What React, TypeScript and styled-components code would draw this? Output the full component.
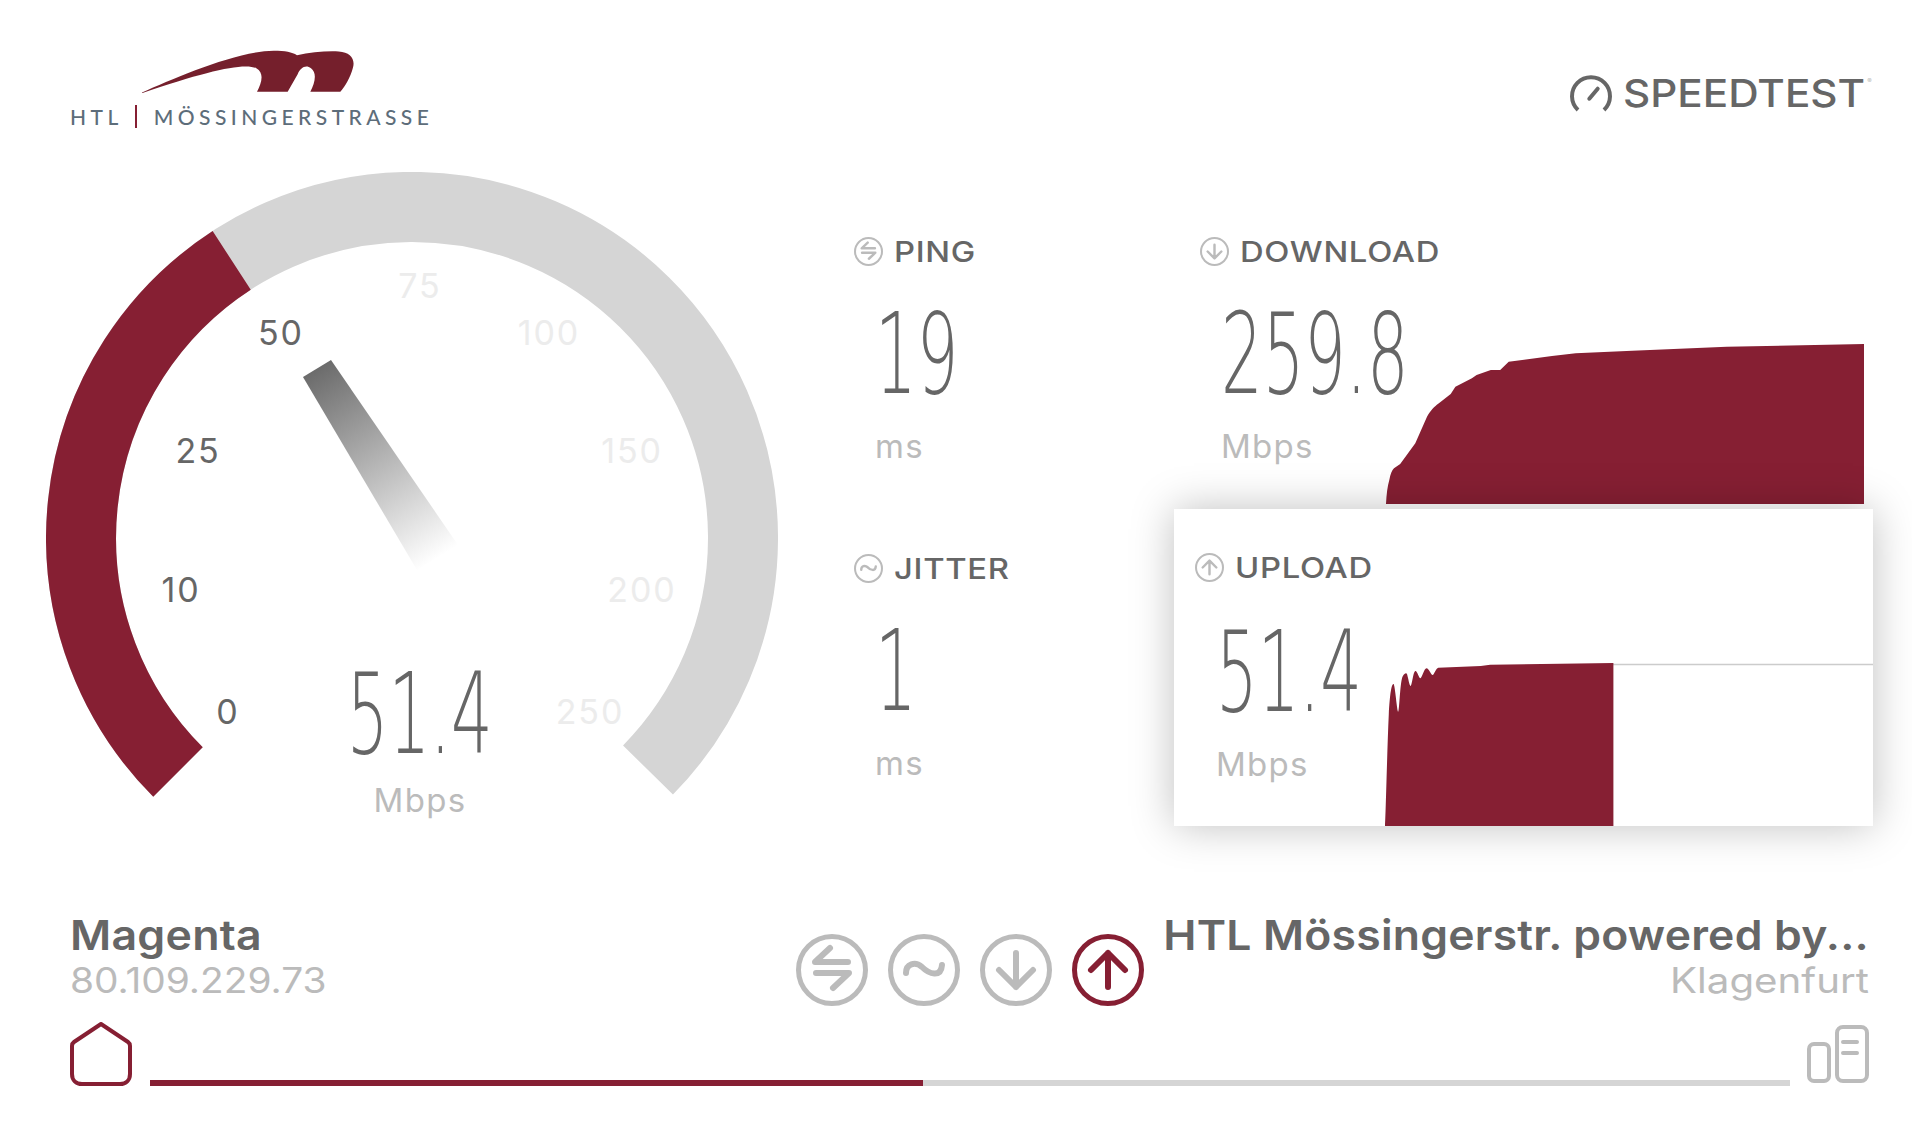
import React from 'react';
import styled, { createGlobalStyle } from 'styled-components';

const RED = '#861f33';
const DARK = '#666666';
const LIGHT = '#bbbbbb';
const TRACK = '#d5d5d5';

const GlobalStyle = createGlobalStyle`
  html, body {
    margin: 0;
    padding: 0;
    background: #ffffff;
  }
  body {
    font-family: Inter, "Liberation Sans", sans-serif;
    color: ${DARK};
  }
`;

const Page = styled.div`
  width: 1912px;
  height: 1144px;
  overflow: hidden;
  display: flex;
  flex-direction: column;
`;

const Header = styled.header`
  height: 172px;
  box-sizing: border-box;
  padding: 50px 47px 0 70px;
  display: flex;
  justify-content: space-between;
  align-items: flex-start;
`;

const Logo = styled.div`
  display: flex;
  flex-direction: column;
`;

const LogoMark = styled.svg`
  width: 212px;
  height: 43px;
  margin-left: 72px;
`;

const LogoText = styled.div`
  display: flex;
  align-items: center;
  height: 23px;
  margin-top: 12px;
  font-family: Lato, sans-serif;
  font-size: 21px;
  font-weight: 500;
  line-height: 23px;
  letter-spacing: 4.45px;
  color: #5d6d7a;
  white-space: nowrap;
`;

const LogoBar = styled.span`
  width: 2px;
  height: 23px;
  margin: 0 17px 0 12px;
  background: ${RED};
`;

const Brand = styled.div`
  display: flex;
  align-items: center;
  gap: 34px;
  margin-top: 20px;
`;

const BrandIcon = styled.svg`
  width: 44px;
  height: 38px;
`;

const BrandName = styled.div`
  font-size: 38px;
  line-height: 46px;
  font-weight: 500;
  color: ${DARK};
  position: relative;
  transform: scaleX(1.11);
  transform-origin: right;
  sup {
    position: absolute;
    top: 8px;
    right: -6px;
    font-size: 6px;
    line-height: 6px;
    color: ${LIGHT};
  }
`;

const Main = styled.main`
  height: 654px;
  padding-left: 46px;
  display: flex;
`;

const Gauge = styled.div`
  width: 732px;
  height: 654px;
  position: relative;
  flex: none;
`;

const GaugeDial = styled.svg`
  width: 732px;
  height: 654px;
  display: block;
`;

const GaugeLabel = styled.text<{ $active: boolean }>`
  font-size: 34px;
  letter-spacing: 1.9px;
  font-family: Inter, sans-serif;
  fill: ${(p) => (p.$active ? DARK : '#ececec')};
  text-anchor: middle;
  dominant-baseline: central;
`;

const GaugeReadout = styled.div`
  position: absolute;
  top: 501px;
  left: 16px;
  right: 0;
  display: flex;
  flex-direction: column;
  align-items: center;
`;

const Value = styled.div<{ $center?: boolean }>`
  font-family: "DejaVu Sans", sans-serif;
  font-weight: 200;
  font-size: 112px;
  height: 82px;
  line-height: 82px;
  color: ${DARK};
  white-space: nowrap;
  transform: scaleX(0.585);
  transform-origin: ${(p) => (p.$center ? 'center' : 'left')};
`;

const Unit = styled.div`
  font-size: 33px;
  line-height: 40px;
  letter-spacing: 1.3px;
  color: ${LIGHT};
`;

const GaugeUnit = styled(Unit)`
  margin-top: 25px;
`;

const Stats = styled.section`
  margin-left: 76px;
  padding-top: 20px;
  display: grid;
  grid-template-columns: 320px 699px;
  grid-auto-rows: 317px;
`;

const Stat = styled.div`
  box-sizing: border-box;
  padding-top: 45px;
  position: relative;
`;

const WideStat = styled(Stat)<{ $raised?: boolean }>`
  padding-left: ${(p) => (p.$raised ? 21 : 26)}px;
  background: #ffffff;
  ${(p) => (p.$raised ? 'z-index: 2; box-shadow: 0 0 40px rgba(0, 0, 0, 0.25);' : '')}
`;

const StatHead = styled.div<{ $raised?: boolean }>`
  display: flex;
  align-items: center;
  gap: 11px;
  height: 29px;
  transform: translateY(${(p) => (p.$raised ? -1 : 0)}px);
`;

const StatTitle = styled.span`
  font-size: 29px;
  line-height: 29px;
  font-weight: 500;
  letter-spacing: 0.6px;
  color: ${DARK};
  transform: scaleX(1.13);
  transform-origin: left;
`;

const StatBody = styled.div<{ $inset: number; $raised?: boolean }>`
  margin: ${(p) => (p.$raised ? 48 : 47)}px 0 0 ${(p) => p.$inset}px;
  ${Unit} {
    margin-top: 31px;
  }
`;

const Chart = styled.svg<{ $raised?: boolean }>`
  position: absolute;
  left: ${(p) => (p.$raised ? 211 : 212)}px;
  bottom: ${(p) => (p.$raised ? 0 : 5)}px;
  width: ${(p) => (p.$raised ? 488 : 478)}px;
  height: ${(p) => (p.$raised ? 163 : 160)}px;
  display: block;
`;

const Footer = styled.footer`
  flex: 1;
  padding: 86px 43px 0 70px;
  display: flex;
  flex-direction: column;
`;

const InfoRow = styled.div`
  display: flex;
  align-items: flex-start;
  height: 110px;
`;

const Provider = styled.div`
  width: 726px;
  flex: none;
`;

const Server = styled.div`
  flex: 1;
  text-align: right;
  white-space: nowrap;
`;

const Name = styled.div<{ $end?: boolean }>`
  font-size: 41px;
  line-height: 46px;
  font-weight: 600;
  color: ${DARK};
  letter-spacing: 0.2px;
  transform: scaleX(${(p) => (p.$end ? 1.085 : 1.09)});
  transform-origin: ${(p) => (p.$end ? 'right' : 'left')};
`;

const Sub = styled.div<{ $end?: boolean }>`
  font-size: 35px;
  line-height: 40px;
  margin-top: 2px;
  color: ${LIGHT};
  transform: scaleX(${(p) => (p.$end ? 1.15 : 1.11)});
  transform-origin: ${(p) => (p.$end ? 'right' : 'left')};
`;

const Steps = styled.div`
  display: flex;
  gap: 20px;
  margin: 22px 21px 0 0;
`;

const ProgressRow = styled.div`
  display: flex;
  align-items: flex-end;
  height: 64px;
`;

const HomeIcon = styled.svg`
  width: 62px;
  height: 64px;
  flex: none;
`;

const Track = styled.div`
  flex: 1;
  height: 6px;
  margin: 0 17px 0 18px;
  background: ${TRACK};
`;

const TrackFill = styled.div`
  height: 100%;
  background: ${RED};
`;

const ServerIcon = styled.svg`
  width: 62px;
  height: 58px;
  flex: none;
  margin-bottom: 3px;
`;

const STEP_PATHS = {
  ping: 'M52 28H19L34 14M20 39H53L37 54',
  jitter: 'M18 39C18 30 27 27 34 33C41 40 53 44 54 31',
  download: 'M36 19V53M19 36L36 53L53 36',
  upload: 'M36 53V19M19 36L36 19L53 36',
};

type StepName = keyof typeof STEP_PATHS;

const StepIcon = ({ name, size = 72, color = LIGHT }: { name: StepName; size?: number; color?: string }) => (
  <svg width={size} height={size} viewBox="0 0 72 72" fill="none" stroke={color} strokeWidth="5" strokeLinecap="round" strokeLinejoin="round">
    <circle cx="36" cy="36" r="33.5" />
    <path d={STEP_PATHS[name]} strokeWidth="6" />
  </svg>
);

const GAUGE_MARKS = [
  { text: '0', x: 182, y: 539, on: true },
  { text: '10', x: 135, y: 417, on: true },
  { text: '25', x: 152, y: 278, on: true },
  { text: '50', x: 235, y: 160, on: true },
  { text: '75', x: 374, y: 113, on: false },
  { text: '100', x: 503, y: 160, on: false },
  { text: '150', x: 586, y: 278, on: false },
  { text: '200', x: 596, y: 417, on: false },
  { text: '250', x: 544, y: 539, on: false },
];

const DOWNLOAD_CURVE = 'M0 160C0.5 150 1.5 142 3.3 136C4.5 130 6 126 8 124.3L14.2 120L29.3 99.3L41 72.7C45 66 48 63 52.9 59.3L64.7 50L69.4 42.7L85.9 34.3L90.6 31L104.8 26L114.2 26L122.7 17.7L166 12L189.7 9.3L246.3 6.7L340.7 2.7L478 0V160Z';
const UPLOAD_CURVE = 'M0 163C1 145 2 90 3.8 51C5 30 6.5 21 8.5 21C10 21 12 48.7 13.2 48.7C14.5 48 15 17 17.9 13C19.5 10 21.5 9.5 22 11C23 14 24.5 23 25.5 23C27 23 28 9 30.2 8C32 7 34 15.3 35.4 15.3C37 15 39 5.5 41.5 5.3C43.5 5 46 12 47.7 12C49 12 51 5 53.3 4.7L95.8 3L105.2 1.7L228.4 0V163Z';

const App = () => (
  <Page>
    <GlobalStyle />
    <Header>
      <Logo>
        <LogoMark viewBox="305 58 636 128">
          <path
            fill="#751f2c"
            d="M305 185C400 143 590 60 700 60C735 60 755 64 770 73C810 64 860 60 895 62C930 64 945 85 938 110C930 140 915 165 900 183H810C825 155 830 125 812 112C795 100 780 112 772 130L742 183H650C665 155 672 125 648 112C610 95 500 120 305 187Z"
          />
        </LogoMark>
        <LogoText>
          HTL
          <LogoBar />
          MÖSSINGERSTRASSE
        </LogoText>
      </Logo>
      <Brand>
        <BrandIcon viewBox="0 0 44 38" fill="none" stroke={DARK} strokeWidth="4">
          <path d="M9 36A19 19 0 1 1 35 36" />
          <path d="M20.3 24.7L28.7 14.7" strokeLinecap="round" />
        </BrandIcon>
        <BrandName>
          SPEEDTEST<sup>®</sup>
        </BrandName>
      </Brand>
    </Header>

    <Main>
      <Gauge>
        <GaugeDial viewBox="0 0 732 654">
          <defs>
            <linearGradient id="needle" gradientUnits="userSpaceOnUse" x1="271" y1="196" x2="392" y2="386">
              <stop offset="0" stopColor="#6b6b6b" />
              <stop offset="1" stopColor="#ffffff" />
            </linearGradient>
          </defs>
          <path d="M132 600A331 331 0 1 1 602 598" fill="none" stroke={TRACK} strokeWidth="70" />
          <path d="M132 600A331 331 0 0 1 185.7 88.4" fill="none" stroke={RED} strokeWidth="70" />
          <polygon points="257,205 285,188 412,373 371,398" fill="url(#needle)" />
          {GAUGE_MARKS.map((mark) => (
            <GaugeLabel key={mark.text} x={mark.x} y={mark.y} $active={mark.on}>
              {mark.text}
            </GaugeLabel>
          ))}
        </GaugeDial>
        <GaugeReadout>
          <Value $center>51.4</Value>
          <GaugeUnit>Mbps</GaugeUnit>
        </GaugeReadout>
      </Gauge>

      <Stats>
        <Stat>
          <StatHead>
            <StepIcon name="ping" size={29} />
            <StatTitle>PING</StatTitle>
          </StatHead>
          <StatBody $inset={21}>
            <Value>19</Value>
            <Unit>ms</Unit>
          </StatBody>
        </Stat>
        <WideStat>
          <StatHead>
            <StepIcon name="download" size={29} />
            <StatTitle>DOWNLOAD</StatTitle>
          </StatHead>
          <StatBody $inset={21}>
            <Value>259.8</Value>
            <Unit>Mbps</Unit>
          </StatBody>
          <Chart viewBox="0 0 478 160">
            <path d={DOWNLOAD_CURVE} fill={RED} />
          </Chart>
        </WideStat>
        <Stat>
          <StatHead>
            <StepIcon name="jitter" size={29} />
            <StatTitle>JITTER</StatTitle>
          </StatHead>
          <StatBody $inset={21}>
            <Value>1</Value>
            <Unit>ms</Unit>
          </StatBody>
        </Stat>
        <WideStat $raised>
          <StatHead $raised>
            <StepIcon name="upload" size={29} />
            <StatTitle>UPLOAD</StatTitle>
          </StatHead>
          <StatBody $inset={21} $raised>
            <Value>51.4</Value>
            <Unit>Mbps</Unit>
          </StatBody>
          <Chart $raised viewBox="0 0 488 163">
            <path d="M228 1.5H488" stroke="#cccccc" strokeWidth="1.5" fill="none" />
            <path d={UPLOAD_CURVE} fill={RED} />
          </Chart>
        </WideStat>
      </Stats>
    </Main>

    <Footer>
      <InfoRow>
        <Provider>
          <Name>Magenta</Name>
          <Sub>80.109.229.73</Sub>
        </Provider>
        <Steps>
          <StepIcon name="ping" />
          <StepIcon name="jitter" />
          <StepIcon name="download" />
          <StepIcon name="upload" color={RED} />
        </Steps>
        <Server>
          <Name $end>HTL Mössingerstr. powered by...</Name>
          <Sub $end>Klagenfurt</Sub>
        </Server>
      </InfoRow>
      <ProgressRow>
        <HomeIcon viewBox="0 0 62 64" fill="none" stroke={RED} strokeWidth="4" strokeLinejoin="round">
          <path d="M31 2L58 20C59.3 20.9 60 22 60 24V52C60 58 56 62 50 62H12C6 62 2 58 2 52V24C2 22 2.7 20.9 4 20Z" />
        </HomeIcon>
        <Track>
          <TrackFill style={{ width: `${(773 / 1640) * 100}%` }} />
        </Track>
        <ServerIcon viewBox="0 0 62 58" fill="none" stroke={LIGHT} strokeWidth="4" strokeLinecap="round">
          <rect x="2" y="19" width="20" height="37" rx="5" />
          <rect x="30" y="2" width="30" height="54" rx="6" />
          <path d="M36 17H50M36 28H50" />
        </ServerIcon>
      </ProgressRow>
    </Footer>
  </Page>
);

export default App;
